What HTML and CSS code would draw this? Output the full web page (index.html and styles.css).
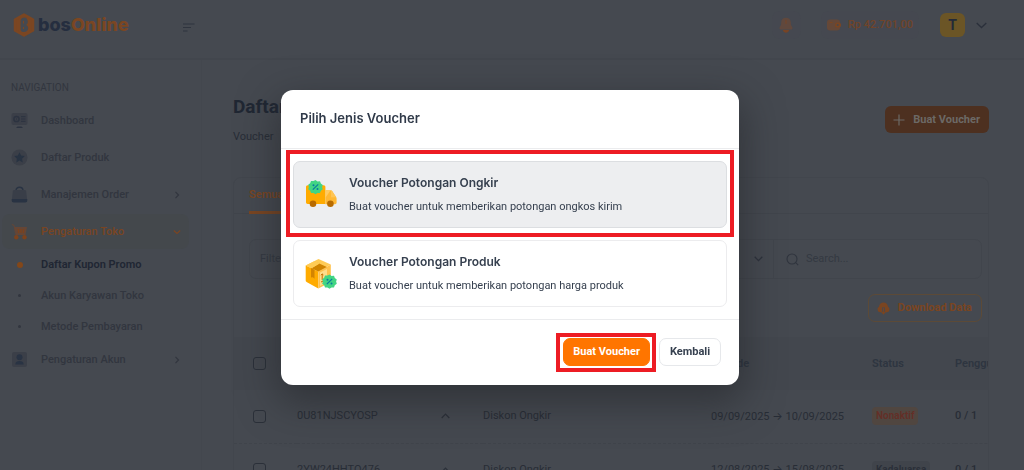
FILE: index.html
```html
<!DOCTYPE html>
<html lang="id">
<head>
<meta charset="utf-8">
<title>bosOnline - Daftar Kupon Promo</title>
<link rel="stylesheet" href="styles.css">
</head>
<body>
<div class="page">
  <header class="topbar">
    <a class="logo" href="#">
      <svg width="22" height="24" viewBox="0 0 22 24"><path d="M11 1.5 20 6.500v11L11 22.500 2 17.500v-11z" fill="#7b4622" stroke="#7b4622" stroke-width="2.500" stroke-linejoin="round"/><path d="M11.500 4.500c-2.500 0-3.900 1.500-3.900 3.600v8.400c0 1.600 1.300 2.600 3.300 2.600 2.400 0 4.300-1.500 4.300-3.800 0-1.500-.8-2.700-2.200-3.300 1.100-.7 1.800-1.700 1.800-3.100 0-2.400-1.300-4.400-3.300-4.400z" fill="#454950"/><path d="M10.500 8v2.500M10.500 14v2" stroke="#7b4622" stroke-width="1"/></svg>
      <span class="logo-text">bos<b>Online</b></span>
    </a>
    <button class="icon-btn menu-btn" aria-label="Menu"><svg width="12" height="9" viewBox="0 0 12 9" stroke="#2f343e" stroke-width="1.200"><path d="M0 1h11.500M0 4.500h8M0 8h4.500"/></svg></button>
    <div class="top-actions">
      <button class="icon-btn bell" aria-label="Notifikasi"><svg width="14" height="17" viewBox="0 0 14 17"><path d="M7 .8c-3 0-4.800 2-4.800 4.700 0 2.300-.5 3.300-1.400 4.400-.8 1.300 0 2.700 1.500 2.700h9.400c1.500 0 2.300-1.400 1.500-2.700-.9-1.100-1.400-2.100-1.400-4.400C11.800 2.800 10 .8 7 .8z" fill="#60483d"/><path d="M3.800 13h6.400c-.5 1.700-1.700 2.800-3.200 2.800S4.300 14.700 3.800 13z" fill="#764426"/><path d="M7 3.500v3" stroke="#764426" stroke-linecap="round"/></svg></button>
      <button class="balance"><svg width="14" height="12" viewBox="0 0 14 12"><rect y=".5" width="13" height="11" rx="3" fill="#654838"/><path d="M2.500 3.500h3" stroke="#7b4622"/><rect x="8" y="3.500" width="6" height="5" rx="2.500" fill="#7b4622"/><circle cx="10.700" cy="6" r="1" fill="#454950"/></svg>Rp 42.701,00</button>
      <button class="account" aria-label="Akun"><span class="avatar">T</span><svg width="11" height="7" viewBox="0 0 11 7" fill="none" stroke="#2b303b" stroke-width="1.300"><path d="M.7 1 5.500 5.500 10.300 1"/></svg></button>
    </div>
  </header>

  <div class="body">
    <nav class="sidebar">
      <p class="nav-label">NAVIGATION</p>
      <a class="nav-item" href="#"><svg class="ico" viewBox="0 0 17 17"><rect x=".5" y="1" width="16" height="12" rx="2" fill="#3b3f48"/><circle cx="5.500" cy="7" r="2.600" fill="none" stroke="#2c3340" stroke-width="1.500"/><circle cx="5.500" cy="7" r=".7" fill="#2c3340"/><path d="M10 4.700h4.500M10 7h4.500M10 9.300h4.500" stroke="#2c3340"/><path d="M5 16l1.500-1.500h4L12 16z" fill="#2c3340"/></svg>Dashboard</a>
      <a class="nav-item" href="#"><svg class="ico" viewBox="0 0 17 17"><circle cx="8.500" cy="8.500" r="8" fill="#3b3f48"/><path d="m8.500 3.200 1.600 3.400 3.700.5-2.700 2.600.6 3.700-3.200-1.800-3.200 1.800.6-3.700-2.700-2.600 3.700-.5z" fill="#283342"/></svg>Daftar Produk</a>
      <a class="nav-item" href="#"><svg class="ico" viewBox="0 0 17 17"><path d="M5 6V4.500C5 .2 12 .2 12 4.500V6" fill="none" stroke="#293343" stroke-width="1.400"/><path d="M3.500 4h10c1 0 1.500.5 1.700 1.500L16 13H1l.8-7.500C2 4.500 2.500 4 3.500 4z" fill="#393e48"/><path d="M.7 13h15.600v1.500c0 1.300-.7 2-2 2H2.700c-1.300 0-2-.7-2-2z" fill="#293343"/></svg>Manajemen Order<svg class="chev" viewBox="0 0 8 8"><path d="m2.500.8 3 3.200-3 3.200"/></svg></a>
      <a class="nav-item active" href="#"><svg class="ico" viewBox="0 0 17 17"><path d="M.8 1.500 3 2.300l1.600 8.500" fill="none" stroke="#654636"/><path d="M3.300 4H16l-1.500 8H4.700z" fill="#654636"/><path d="M7.300 6l.4 4M10 6v4M12.700 6l-.4 4" stroke="#7d421c" stroke-width="1.300"/><circle cx="5.300" cy="14.300" r="2.200" fill="#7d421c"/><circle cx="13.500" cy="14.300" r="2.200" fill="#7d421c"/></svg>Pengaturan Toko<svg class="chev" viewBox="0 0 8 8"><path d="m.8 2.500 3.200 3 3.200-3"/></svg></a>
      <a class="sub-item current" href="#"><span class="dot"></span>Daftar Kupon Promo</a>
      <a class="sub-item" href="#"><span class="dot"></span>Akun Karyawan Toko</a>
      <a class="sub-item" href="#"><span class="dot"></span>Metode Pembayaran</a>
      <a class="nav-item" href="#"><svg class="ico" viewBox="0 0 17 17"><rect x="1" y="1" width="15" height="15" rx="2" fill="#3b3f48"/><circle cx="8.500" cy="6.300" r="3" fill="#293343"/><path d="M4.300 13.500c.2-2.700 1.700-3.500 4.200-3.500s4 .8 4.200 3.500z" fill="#293343"/></svg>Pengaturan Akun<svg class="chev" viewBox="0 0 8 8"><path d="m2.500.8 3 3.200-3 3.200"/></svg></a>
    </nav>

    <main class="main">
      <div class="page-head">
        <div><h1>Daftar</h1><p class="crumb">Voucher</p></div>
        <button class="create"><svg width="12" height="12" viewBox="0 0 12 12" stroke="#6c6966" stroke-width="1.200"><path d="M6 .5v11M.5 6h11"/></svg>Buat Voucher</button>
      </div>
      <section class="card">
        <div class="tabs"><button class="tab">Semua</button></div>
        <div class="filters">
          <button class="filter">Filter<svg width="9" height="6" viewBox="0 0 9 6" fill="none" stroke="#2d323c" stroke-width="1.300"><path d="M.7.8 4.500 4.600 8.300.8"/></svg></button>
          <label class="search"><svg width="13" height="13" viewBox="0 0 13 13" fill="none" stroke="#30353e" stroke-width="1.100"><circle cx="6" cy="6" r="5"/><path d="m9.700 9.700 2.500 2.500"/></svg><input type="text" placeholder="Search..." aria-label="Search"></label>
        </div>
        <div class="tools"><button class="download"><svg width="13" height="13" viewBox="0 0 13 13"><path d="M3.200 10.300A3 3 0 0 1 2 4.700C2.500 2 4.200.6 6.500.6S10.500 2 11 4.700a3 3 0 0 1-1.200 5.600z" fill="#7a4521"/><path d="M6.500 5.500v5" stroke="#454950" stroke-width="3"/><path d="M6.500 6v4" stroke="#7a4521" stroke-width="1.200"/><path d="M4 9.700h5l-2.500 3z" fill="#7a4521"/></svg>Download Data</button></div>
        <div class="table-wrap">
          <table>
            <colgroup><col class="c-check"><col class="c-code"><col class="c-type"><col class="c-date"><col class="c-status"><col class="c-use"></colgroup>
            <thead><tr><th><input type="checkbox" aria-label="Pilih semua"></th><th></th><th></th><th>Periode</th><th>Status</th><th>Penggunaan</th></tr></thead>
            <tbody>
              <tr><td><input type="checkbox" aria-label="Pilih 0U81NJSCYOSP"></td><td><div class="code">0U81NJSCYOSP<svg width="9" height="6" viewBox="0 0 9 6"><path d="M.7 5 4.500 1.200 8.300 5"/></svg></div></td><td>Diskon Ongkir</td><td>09/09/2025 <span class="arrow">→</span> 10/09/2025</td><td><span class="badge off">Nonaktif</span></td><td class="use">0 / 1</td></tr>
              <tr><td><input type="checkbox" aria-label="Pilih 2YW24HHTO476"></td><td><div class="code">2YW24HHTO476<svg width="9" height="6" viewBox="0 0 9 6"><path d="M.7 5 4.500 1.200 8.300 5"/></svg></div></td><td>Diskon Ongkir</td><td>12/08/2025 <span class="arrow">→</span> 15/08/2025</td><td><span class="badge">Kadaluarsa</span></td><td class="use">0 / 1</td></tr>
            </tbody>
          </table>
        </div>
      </section>
    </main>
  </div>
</div>

<div class="overlay">
  <div class="modal" role="dialog" aria-labelledby="modal-title">
    <h2 id="modal-title">Pilih Jenis Voucher</h2>
    <div class="options">
      <button class="option selected marked">
        <svg width="32" height="32" viewBox="0 0 32 32"><path d="M1 8c0-1 .7-1.700 1.700-1.700h16c1 0 1.700.7 1.700 1.700v17H2.700C1.700 25 1 24.300 1 23.300z" fill="#ffab00"/><path d="M20.400 11.300h5.200c.8 0 1.300.3 1.700 1l3.900 6c.3.500.4.900.4 1.500v3.700c0 1-.7 1.700-1.700 1.700h-9.500z" fill="#ffb834"/><path d="M20.400 11.300h5.200l-5.200 7.500z" fill="#ffcb62"/><path d="M26 11.500c.6 0 1 .3 1.300.8l3.900 6H26z" fill="#ffc554"/><circle cx="8" cy="24.800" r="3.300" fill="#b86b00"/><circle cx="25.400" cy="24.800" r="3.300" fill="#b86b00"/><g transform="translate(10.500 8)"><path id="seal" d="m0-7 2 1.400 2.500-.2.800 2.300 2 1.500L6.600 0l.7 2.300-2 1.500-.8 2.300-2.500-.1L0 7.200-2 6l-2.500.1-.8-2.300-2-1.500.7-2.300-.7-2.300 2-1.500.8-2.300 2.500.2z" fill="#42d583"/><path d="m2.700-2.700-5.400 5.400" stroke="#087aa0" stroke-width="1.200"/><circle cx="-2" cy="-1.800" r="1" fill="#087aa0"/><circle cx="2" cy="2" r="1" fill="#087aa0"/></g></svg>
        <span class="option-text"><strong>Voucher Potongan Ongkir</strong><span>Buat voucher untuk memberikan potongan ongkos kirim</span></span>
      </button>
      <button class="option">
        <svg width="32" height="32" viewBox="0 0 32 32"><path d="M.7 7.500 13.500 1l12.300 5.500-12.500 7z" fill="#ffcb55"/><path d="M.7 7.500l12.600 6v17L2 24.200c-.9-.5-1.300-1-1.300-2z" fill="#ffab00"/><path d="M25.800 6.500l-12.500 7v17l11.300-5.700c.8-.4 1.200-1 1.200-1.900z" fill="#ffc14c"/><path d="M9.300 3.200 21.800 8.900l-8.500 4.600-6.800-3.300 8-4.600z" fill="#cf8300"/><path d="M5.800 5l3.500-1.800 5.200 2.400-8 4.600L.7 7.500z" fill="#ffcb55"/><path d="m6 10 3.500 1.700v9l-1.600-1.500L6 19.500z" fill="#d48400"/><path d="m15 14.500 7-3.500v13.500l-7 3.500z" fill="#ffdc8b"/><path d="M17.200 16v6M16 17.200l1.200-1.300 1.200 1M16 24l3-1.400" fill="none" stroke="#c36e00"/><g transform="translate(24.500 23.500)"><use href="#seal"/><path d="m2.700-2.700-5.400 5.400" stroke="#087aa0" stroke-width="1.200"/><circle cx="-2" cy="-1.800" r="1" fill="#087aa0"/><circle cx="2" cy="2" r="1" fill="#087aa0"/></g></svg>
        <span class="option-text"><strong>Voucher Potongan Produk</strong><span>Buat voucher untuk memberikan potongan harga produk</span></span>
      </button>
    </div>
    <footer class="modal-foot">
      <button class="btn primary marked">Buat Voucher</button>
      <button class="btn">Kembali</button>
    </footer>
  </div>
</div>
</body>
</html>
```
FILE: styles.css
```css
* { box-sizing: border-box; }
body, h1, h2, p { margin: 0; }
body { background: #454950; color: #252b36; font: 11px/16px Roboto, "Liberation Sans", sans-serif; overflow: hidden; }
button, input { font: inherit; color: inherit; }
button { display: flex; align-items: center; border: 0; padding: 0; background: none; white-space: nowrap; }
a { color: inherit; text-decoration: none; }
svg { flex: none; display: block; }

.page { height: 100vh; overflow: hidden; display: flex; flex-direction: column; }
.topbar { flex: none; height: 60px; padding: 0 37px 8px 13px; display: flex; align-items: center; border-bottom: 2px solid #42464d; }
.logo { width: 170px; display: flex; align-items: center; gap: 3px; }
.logo-text { font-family: Inter, sans-serif; font-size: 18px; line-height: 24px; font-weight: 800; color: #252e3f; }
.logo-text b { font-weight: 800; color: #7b4622; }
.menu-btn { padding-top: 4px; }
.top-actions { margin-left: auto; display: flex; align-items: center; }
.bell { width: 29px; height: 28px; margin-right: 20px; justify-content: center; border-radius: 8px; background: #454850; }
.balance { height: 28px; padding: 0 6px; gap: 7px; border-radius: 8px; background: #454850; color: #704429; font-weight: 500; margin-right: 21px; }
.account { gap: 11px; }
.avatar { width: 25px; height: 24px; border-radius: 6px; background: #6b5526; color: #242a38; font-size: 14px; line-height: 24px; font-weight: 700; text-align: center; }

.body { flex: 1; min-height: 0; display: flex; }
.sidebar { flex: none; width: 202px; padding: 20px 12px 0 2px; border-right: 1px solid #43474e; color: #32363f; font-weight: 500; }
.nav-label { padding-left: 9px; margin-bottom: 7px; font-size: 10px; font-weight: 400; }
.nav-item { height: 35px; margin-bottom: 2px; padding: 0 8px 0 9px; display: flex; align-items: center; border-radius: 8px; }
.nav-item.active { background: #44484c; color: #7a4522; margin-bottom: 0; }
.ico { width: 17px; height: 17px; margin-right: 13px; }
.chev { width: 8px; height: 8px; margin-left: auto; fill: none; stroke: currentColor; stroke-width: 1.2; }
.sub-item { height: 31px; padding-left: 9px; display: flex; align-items: center; }
.sub-item.current { color: #202633; font-weight: 600; }
.dot { width: 3px; height: 3px; margin: 0 20px 0 7px; border-radius: 50%; background: #32363f; }
.current .dot { width: 6px; height: 6px; margin: 0 18px 0 6px; background: #834719; }

.main { flex: 1; min-width: 0; padding: 34px 35px 0 31px; }
.page-head { display: flex; justify-content: space-between; align-items: flex-start; height: 83px; }
h1 { font-size: 19px; line-height: 26px; font-weight: 700; color: #202733; }
.crumb { margin-top: 9px; color: #282d37; }
.create { height: 27px; margin-top: 12px; padding: 0 9px 0 8px; gap: 8px; border-radius: 6px; background: #4d3020; color: #6c6966; font-weight: 700; }
.card { border: 1px solid #42464d; border-radius: 8px 8px 0 0; }
.tabs { height: 36px; padding-left: 15px; display: flex; border-bottom: 1px solid #41454c; }
.tab { height: 36px; border-bottom: 3px solid #7b4622; color: #7b4622; font-weight: 600; }
.filters { margin: 25px 6px 15px 15px; height: 40px; display: flex; border: 1px solid #41454c; border-radius: 7px; color: #343942; }
.filter { flex: 1; padding: 0 10px; justify-content: space-between; border-right: 1px solid #41454c; }
.search { width: 207px; padding: 0 12px; display: flex; align-items: center; gap: 7px; }
.search input { width: 100%; border: 0; padding: 0; background: none; outline: 0; }
.search input::placeholder { color: #343942; opacity: 1; }
.tools { padding-right: 6px; display: flex; justify-content: flex-end; }
.download { height: 28px; padding: 0 9px 0 8px; gap: 8px; border: 1px solid #5c4a37; border-radius: 7px; color: #7a4521; font-weight: 700; }
.table-wrap { margin-top: 15px; overflow: hidden; }
table { width: 822px; border-collapse: collapse; table-layout: fixed; }
.c-check { width: 63px; }
.c-code { width: 186px; }
.c-type { width: 228px; }
.c-date { width: 161px; }
.c-status { width: 83px; }
th, td { padding: 0; text-align: left; white-space: nowrap; height: 53px; }
th { font-weight: 600; color: #2e3540; background: #43474e; }
tr > :first-child { padding-left: 19px; }
td { border-bottom: 1px dashed #40444b; color: #282d36; }
input[type="checkbox"] { appearance: none; display: block; width: 13px; height: 13px; margin: 0; border: 1px solid #2b3039; border-radius: 3px; }
.code { display: flex; justify-content: space-between; padding-right: 33px; align-items: center; }
.code svg { fill: none; stroke: #2b3039; stroke-width: 1.2; }
.arrow { font-family: Inter, sans-serif; }
.badge { display: inline-block; padding: 0 4px; border-radius: 4px; background: #40444b; color: #2a2f38; font-size: 10px; line-height: 18px; font-weight: 600; }
.badge.off { background: #504640; color: #642f27; }
.use { font-weight: 500; }

.overlay { position: fixed; inset: 0; padding: 5px 4px 0 0; display: flex; align-items: center; justify-content: center; }
.modal { width: 458px; border-radius: 12px; background: #fff; color: #36404f; box-shadow: 0 14px 38px 4px rgba(32, 34, 38, .55); }
h2 { padding: 18px 19px 19px; font: 600 13px/21px Inter, sans-serif; color: #303a49; border-bottom: 1px solid #ebecee; }
.options { padding: 12px; display: grid; gap: 12px; }
.option { position: relative; height: 67px; padding: 0 11px; gap: 12px; border: 1px solid #ececee; border-radius: 7px; text-align: left; }
.option.selected { background: #edeef0; border-color: #dcdee1; }
.option-text { display: grid; gap: 8px; }
.option-text strong { font: 600 12px/16px Inter, sans-serif; }
.modal-foot { padding: 18px 18px 19px; display: flex; justify-content: flex-end; gap: 9px; border-top: 1px solid #ebecee; }
.btn { position: relative; height: 28px; min-width: 62px; padding: 0 9px; justify-content: center; border: 1px solid #e6e8eb; border-radius: 7px; font-weight: 700; }
.btn.primary { background: #ff7500; border-color: #ff7500; color: #fff; }
.marked::after { content: ""; position: absolute; border: 4px solid #ed1c24; pointer-events: none; }
.option.marked::after { inset: -12px -8px -10px; }
.btn.marked::after { inset: -6px -7px -7px -8px; }
```
